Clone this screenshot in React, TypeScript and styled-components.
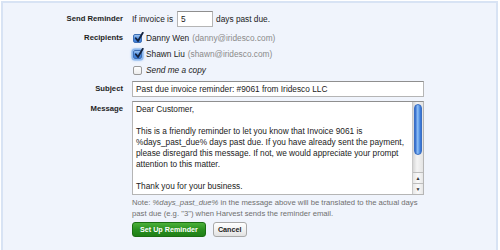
import styled, { createGlobalStyle } from "styled-components";

const GlobalStyle = createGlobalStyle`
  html, body {
    margin: 0;
    padding: 0;
    background: #ffffff;
  }
  body {
    font-family: "Liberation Sans", Arial, sans-serif;
    color: #222;
  }
`;

const Panel = styled.div`
  margin: 1px;
  width: 493px;
  height: 243px;
  border: 2px solid #d8e3f4;
  background: #f0f4fc;
  padding-top: 8px;
  box-sizing: content-box;
`;

const Form = styled.div`
  display: grid;
  grid-template-columns: 120px 1fr;
  column-gap: 9px;
`;

const Label = styled.div<{ $top?: number }>`
  text-align: right;
  font-weight: bold;
  font-size: 7.7px;
  color: #1e1e1e;
  line-height: 16px;
  padding-top: ${(p) => p.$top ?? 0}px;
`;

const Field = styled.div`
  display: flex;
  align-items: center;
  font-size: 8.3px;
  line-height: 16px;
  color: #222;
`;

const Cell = styled.div<{ $mt?: number }>`
  margin-top: ${(p) => p.$mt ?? 0}px;
`;

const SmallInput = styled.input`
  width: 36px;
  height: 16px;
  box-sizing: border-box;
  margin: 0 3px 0 4px;
  padding: 0 0 0 3px;
  border: 1px solid #b5b5b5;
  border-top-color: #8f8f8f;
  background: #fff;
  font-family: inherit;
  font-size: 8.3px;
  color: #222;
  outline: none;
`;

const WideInput = styled.input`
  width: 292px;
  height: 16px;
  box-sizing: border-box;
  margin: 0;
  padding: 0 0 0 3px;
  border: 1px solid #b5b5b5;
  border-top-color: #8f8f8f;
  background: #fff;
  font-family: inherit;
  font-size: 8.3px;
  color: #222;
  outline: none;
  display: block;
`;

const CheckList = styled.div`
  display: flex;
  flex-direction: column;
`;

const CheckRow = styled.label`
  display: flex;
  align-items: center;
  height: 16px;
  font-size: 8.3px;
  color: #222;
`;

const Box = styled.span<{ $checked?: boolean; $focus?: boolean }>`
  position: relative;
  width: 9px;
  height: 9px;
  margin: 0 4px 0 1px;
  border-radius: 2px;
  box-sizing: border-box;
  border: 1px solid ${(p) => (p.$checked ? "#3d6fb6" : "#9a9a9a")};
  background: ${(p) =>
    p.$checked
      ? "linear-gradient(#9cc3f0, #4a8ae0 55%, #3c7bd6)"
      : "linear-gradient(#ffffff, #ececec)"};
  box-shadow: ${(p) =>
    p.$focus ? "0 0 0 1.5px #8db8ee, 0 0 2px 2px #b8d4f6" : "none"};
  flex: none;

  svg {
    position: absolute;
    left: 0px;
    top: -3px;
  }
`;

const Name = styled.span`
  color: #222;
`;

const Email = styled.span`
  color: #8a8a8a;
  margin-left: 3px;
`;

const Italic = styled.span`
  font-style: italic;
`;

const TextBox = styled.div`
  display: flex;
  width: 292px;
  height: 94px;
  box-sizing: border-box;
  border: 1px solid #b5b5b5;
  border-top-color: #8f8f8f;
  background: #fff;
`;

const MessageArea = styled.textarea`
  flex: 1;
  border: none;
  resize: none;
  overflow: hidden;
  white-space: pre;
  margin: 0;
  padding: 2px 3px;
  font-family: inherit;
  font-size: 8.3px;
  line-height: 11px;
  color: #222;
  background: transparent;
  outline: none;
`;

const Scrollbar = styled.div`
  width: 10px;
  display: flex;
  flex-direction: column;
  background: linear-gradient(90deg, #d6d6d6, #f4f4f4 40%, #e4e4e4);
  border-left: 1px solid #c8c8c8;
`;

const Thumb = styled.div`
  margin: 2px 0 0 1px;
  width: 8px;
  height: 51px;
  border-radius: 4px;
  background: linear-gradient(90deg, #2a63c9, #8fc0f6 45%, #5b98e6 70%, #2f6cd0);
  border: 1px solid #3b6fc2;
  box-sizing: border-box;
`;

const Track = styled.div`
  flex: 1;
`;

const Arrow = styled.div`
  height: 10px;
  border-top: 1px solid #bdbdbd;
  display: flex;
  align-items: center;
  justify-content: center;
  font-size: 5px;
  color: #333;
  background: linear-gradient(90deg, #e6e6e6, #fafafa 50%, #e6e6e6);
`;

const Note = styled.div`
  font-size: 7.7px;
  line-height: 11px;
  color: #6f6f6f;
  margin-top: 2px;
`;

const Buttons = styled.div`
  display: flex;
  gap: 7px;
  margin-top: 3px;
`;

const Button = styled.button<{ $primary?: boolean }>`
  height: 15px;
  padding: 0 ${(p) => (p.$primary ? 7 : 4)}px;
  border-radius: 3px;
  font-family: inherit;
  font-weight: bold;
  font-size: 7.2px;
  line-height: 13px;
  cursor: pointer;
  border: 1px solid ${(p) => (p.$primary ? "#1b6e12" : "#a9a9a9")};
  color: ${(p) => (p.$primary ? "#ffffff" : "#222")};
  background: ${(p) =>
    p.$primary
      ? "linear-gradient(#4bb13a, #2a9020 50%, #1f8016)"
      : "linear-gradient(#ffffff, #f2f2f2 50%, #e2e2e2)"};
`;

const Check = () => (
  <svg width="10" height="11" viewBox="0 0 10 11">
    <path
      d="M1.8 6.2 L4 9 L8.8 0.8"
      fill="none"
      stroke="#14233f"
      strokeWidth="1.8"
      strokeLinecap="round"
      strokeLinejoin="round"
    />
  </svg>
);

const message =
  "Dear Customer,\n\nThis is a friendly reminder to let you know that Invoice 9061 is\n%days_past_due% days past due. If you have already sent the payment,\nplease disregard this message. If not, we would appreciate your prompt\nattention to this matter.\n\nThank you for your business.";

export default function App() {
  return (
    <>
      <GlobalStyle />
      <Panel>
        <Form>
          <Label>Send Reminder</Label>
          <Field>
            If invoice is
            <SmallInput defaultValue="5" />
            days past due.
          </Field>

          <Label $top={3}>Recipients</Label>
          <Cell $mt={3}>
            <CheckList>
              <CheckRow>
                <Box $checked>
                  <Check />
                </Box>
                <Name>Danny Wen</Name>
                <Email>(danny@iridesco.com)</Email>
              </CheckRow>
              <CheckRow>
                <Box $checked $focus>
                  <Check />
                </Box>
                <Name>Shawn Liu</Name>
                <Email>(shawn@iridesco.com)</Email>
              </CheckRow>
              <CheckRow>
                <Box />
                <Italic>Send me a copy</Italic>
              </CheckRow>
            </CheckList>
          </Cell>

          <Label $top={3}>Subject</Label>
          <Cell $mt={3}>
            <WideInput defaultValue="Past due invoice reminder: #9061 from Iridesco LLC" />
          </Cell>

          <Label $top={4}>Message</Label>
          <Cell $mt={4}>
            <TextBox>
              <MessageArea defaultValue={message} />
              <Scrollbar>
                <Thumb />
                <Track />
                <Arrow>▲</Arrow>
                <Arrow>▼</Arrow>
              </Scrollbar>
            </TextBox>
            <Note>
              Note: <Italic>%days_past_due%</Italic> in the message above will
              be translated to the actual days
              <br />
              past due (e.g. "3") when Harvest sends the reminder email.
            </Note>
            <Buttons>
              <Button $primary>Set Up Reminder</Button>
              <Button>Cancel</Button>
            </Buttons>
          </Cell>
        </Form>
      </Panel>
    </>
  );
}
